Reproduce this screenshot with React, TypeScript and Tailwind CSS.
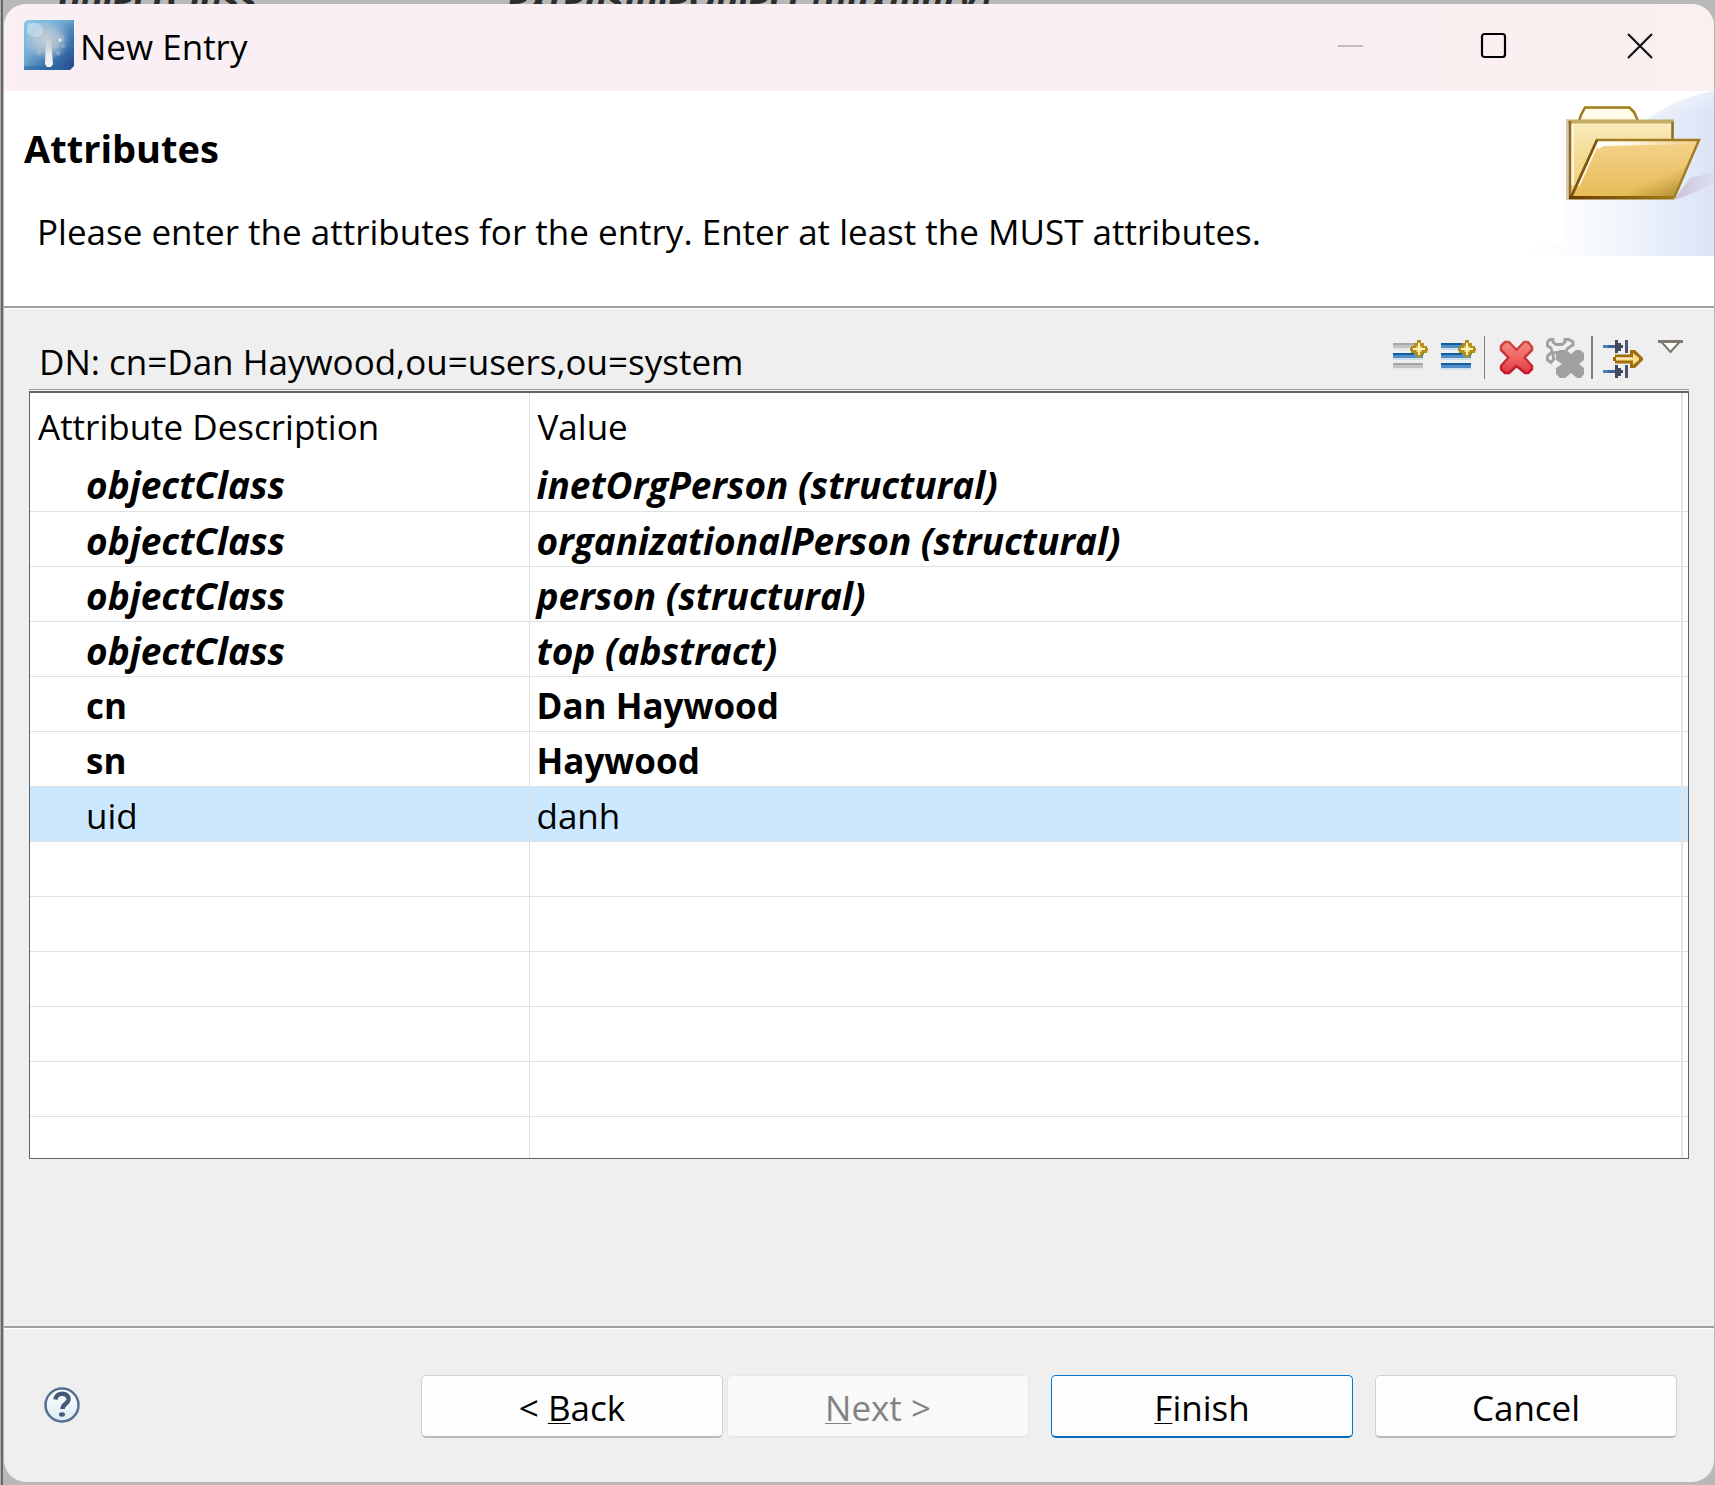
import React from "react";

type Entry = { name: string; value: string; kind: "objectClass" | "must" | "may" };

const entries: Entry[] = [
  { name: "objectClass", value: "inetOrgPerson (structural)", kind: "objectClass" },
  { name: "objectClass", value: "organizationalPerson (structural)", kind: "objectClass" },
  { name: "objectClass", value: "person (structural)", kind: "objectClass" },
  { name: "objectClass", value: "top (abstract)", kind: "objectClass" },
  { name: "cn", value: "Dan Haywood", kind: "must" },
  { name: "sn", value: "Haywood", kind: "must" },
  { name: "uid", value: "danh", kind: "may" },
];

const kindClass = {
  objectClass: "font-bold italic text-[37px]",
  must: "font-bold",
  may: "bg-[#cce8ff]",
};

function AppIcon() {
  return (
    <svg className="size-[50px]" viewBox="0 0 50 50" aria-hidden="true">
      <defs>
        <linearGradient id="app-bg" x1="0" y1="0" x2="1" y2="1">
          <stop offset="0" stopColor="#b4e0f4" />
          <stop offset="0.35" stopColor="#7fb2d6" />
          <stop offset="0.65" stopColor="#3f78b0" />
          <stop offset="1" stopColor="#1f4788" />
        </linearGradient>
        <radialGradient id="app-crown">
          <stop offset="0" stopColor="#c9d0d6" stopOpacity="0.95" />
          <stop offset="0.5" stopColor="#b9c8d4" stopOpacity="0.75" />
          <stop offset="1" stopColor="#8fb3d0" stopOpacity="0" />
        </radialGradient>
        <linearGradient id="app-trunk" x1="0" y1="0" x2="0" y2="1">
          <stop offset="0" stopColor="#d5dbe0" stopOpacity="0.3" />
          <stop offset="0.5" stopColor="#e6eaee" />
          <stop offset="1" stopColor="#f5f7f8" />
        </linearGradient>
      </defs>
      <path d="M3 0H50V46L46 50H0V3Z" fill="url(#app-bg)" />
      <path d="M3 0H50V3H5L3 5V48H0V3Z" fill="#5fb4dc" opacity="0.5" />
      <path d="M0 46H46V50H0Z" fill="#2c63a2" opacity="0.5" />
      <ellipse cx="23" cy="20" rx="24" ry="21" fill="url(#app-crown)" />
      <ellipse cx="11" cy="10" rx="8" ry="7" fill="#fff" opacity="0.3" />
      <path d="M22 20h5l2 24-2 3h-4l-2-3z" fill="url(#app-trunk)" />
      <g fill="#a9bfd1" opacity="0.5">
        <circle cx="37" cy="19" r="3.500" />
        <circle cx="32" cy="25" r="3" />
        <circle cx="39" cy="26" r="2" />
        <circle cx="15" cy="32" r="3" />
        <circle cx="34" cy="33" r="2.500" />
      </g>
      <circle cx="36" cy="20" r="1.500" fill="#eef2f4" />
    </svg>
  );
}

function FolderBanner() {
  return (
    <svg className="h-[165px] w-[185px] shrink-0" viewBox="1529 91 185 165" aria-hidden="true">
      <defs>
        <linearGradient id="sky" x1="0" y1="0" x2="1" y2="0">
          <stop offset="0" stopColor="#ffffff" />
          <stop offset="0.22" stopColor="#fbfcfe" />
          <stop offset="0.5" stopColor="#f1f5fc" />
          <stop offset="0.75" stopColor="#e5ecf9" />
          <stop offset="1" stopColor="#dce3f6" />
        </linearGradient>
        <linearGradient id="sky-glow" x1="0" y1="0" x2="0.3" y2="1">
          <stop offset="0" stopColor="#ffffff" stopOpacity="0.7" />
          <stop offset="0.6" stopColor="#ffffff" stopOpacity="0" />
        </linearGradient>
        <linearGradient id="folder-back" x1="0" y1="0" x2="0" y2="1">
          <stop offset="0" stopColor="#faf3cf" />
          <stop offset="0.5" stopColor="#f5dd97" />
          <stop offset="1" stopColor="#f0cb70" />
        </linearGradient>
        <linearGradient id="folder-front" x1="0" y1="0" x2="0" y2="1">
          <stop offset="0" stopColor="#f5d28b" />
          <stop offset="1" stopColor="#e5bc55" />
        </linearGradient>
        <linearGradient id="folder-edge" x1="0" y1="0" x2="1" y2="0">
          <stop offset="0" stopColor="#6b3d00" />
          <stop offset="1" stopColor="#a07a18" />
        </linearGradient>
        <linearGradient id="folder-shade" x1="0" y1="0" x2="1" y2="1">
          <stop offset="0.66" stopColor="#a07a18" stopOpacity="0" />
          <stop offset="0.95" stopColor="#8f6d1c" stopOpacity="0.7" />
        </linearGradient>
        <linearGradient id="folder-lip" x1="0" y1="0" x2="1" y2="0">
          <stop offset="0" stopColor="#ffffff" />
          <stop offset="0.3" stopColor="#fffaf0" />
          <stop offset="1" stopColor="#f9e2b4" stopOpacity="0.2" />
        </linearGradient>
        <linearGradient id="folder-shadow" x1="0" y1="0" x2="1" y2="0">
          <stop offset="0" stopColor="#c0b4cc" stopOpacity="0.8" />
          <stop offset="1" stopColor="#d3cde2" stopOpacity="0.3" />
        </linearGradient>
      </defs>
      <path d="M1529 244H1564V200L1640 124Q1674 98 1714 91V256H1529Z" fill="url(#sky)" />
      <path d="M1640 124Q1674 98 1714 91V145H1640Z" fill="url(#sky-glow)" />
      <path d="M1674 200L1690 178L1714 172V182Q1695 194 1674 200Z" fill="url(#folder-shadow)" />
      <path d="M1569 198V121H1578L1580 116L1585 107.500H1629L1634 113L1638 121H1672.500V198Z" fill="url(#folder-back)" />
      <path d="M1580 119L1586 109H1629L1636 119Z" fill="#fdfaea" />
      <path d="M1567.500 119V200" stroke="#d8c9ae" strokeWidth="3" />
      <path d="M1572.500 124V185" stroke="#fdf6da" strokeWidth="3" />
      <path d="M1579 121L1581 115L1585 107.500H1629.500L1634 112L1638 121" fill="none" stroke="#a07b1a" strokeWidth="2.500" />
      <path d="M1568 121.500H1674" stroke="#c4ac66" strokeWidth="4" />
      <path d="M1570 199V121M1672.500 122V140" stroke="#91692a" strokeWidth="2.500" />
      <path d="M1597 140H1699L1674 198H1571Z" fill="url(#folder-front)" />
      <path d="M1597 140H1699L1674 198H1571Z" fill="url(#folder-shade)" />
      <path d="M1578 186L1598 142" stroke="#fffaf0" strokeWidth="3" />
      <path d="M1597 141H1694V144L1604 146L1598 149Z" fill="url(#folder-lip)" />
      <path d="M1571 198L1597 140H1699L1674 198" fill="none" stroke="#a27c21" strokeWidth="2.500" />
      <path d="M1571 197L1597 140" stroke="#7d5510" strokeWidth="2.500" />
      <rect x="1569" y="196" width="105" height="3.500" fill="url(#folder-edge)" />
    </svg>
  );
}

function Spark({ x, y }: { x: number; y: number }) {
  return (
    <g transform={`translate(${x} ${y})`}>
      <path d="M-2-9H2V-6H5V-3H8V-1H9V2H8V4H5V6H2V9H-2V6H-5V4H-8V2H-9V-1H-8V-3H-5V-6H-2Z" fill="#b38d1c" />
      <path d="M-3-3H3V3H-3Z" fill="#dcc063" />
      <path d="M-1-6H1V-1H6V1H1V6H-1V1H-6V-1H-1Z" fill="#fff3b8" />
    </g>
  );
}

function Bar({ y, gray = false }: { y: number; gray?: boolean }) {
  return (
    <>
      <rect x="3" y={y} width="30" height="2" fill={gray ? "#a7a7a7" : "#0f5fa2"} />
      <rect x="3" y={y + 2} width="30" height="3" fill={gray ? "#c4c4c4" : "#4f8fc4"} />
      <rect x="3" y={y + 5} width="30" height="2" fill={gray ? "#e6e9ec" : "#cfe0f0"} />
    </>
  );
}

function NewValueIcon() {
  return (
    <svg className="h-11 w-12" viewBox="0 0 48 44" aria-hidden="true">
      <Bar y={7} gray />
      <Bar y={17} />
      <Bar y={27} gray />
      <Spark x={29} y={13} />
    </svg>
  );
}

function NewAttributeIcon() {
  return (
    <svg className="h-11 w-[46px]" viewBox="0 0 46 44" aria-hidden="true">
      <Bar y={7} />
      <Bar y={17} />
      <Bar y={27} />
      <Spark x={29} y={13} />
    </svg>
  );
}

function DeleteIcon() {
  return (
    <svg className="h-11 w-[58px]" viewBox="0 0 58 44" aria-hidden="true">
      <defs>
        <linearGradient id="red-x" x1="0" y1="0" x2="0" y2="1">
          <stop offset="0" stopColor="#f58a80" />
          <stop offset="0.5" stopColor="#f26565" />
          <stop offset="1" stopColor="#e03a42" />
        </linearGradient>
        <linearGradient id="red-edge" x1="0" y1="0" x2="0" y2="1">
          <stop offset="0" stopColor="#cf4a40" />
          <stop offset="1" stopColor="#c4152a" />
        </linearGradient>
      </defs>
      <path
        d="M20 6L24 6L31.500 14L39 6H43L47 11V14L39.500 21.500L47 30V33L43 37H40L31.500 30L24 37H20L16 33V30L23.500 21.500L16 14V10Z"
        fill="url(#red-x)"
        stroke="url(#red-edge)"
        strokeWidth="2.500"
        strokeLinejoin="round"
      />
    </svg>
  );
}

function DeleteAllIcon() {
  return (
    <svg className="h-11 w-12" viewBox="0 0 48 44" aria-hidden="true">
      <path
        d="M7 3.500H10V6L13 8.500H19L22 6V3.500H26L30 6V9L25 12L22 16H17L10 17V20L11 23L8 26.500L4.500 24V20L9 16L8 12L4.500 10V6Z"
        fill="#efefef"
        stroke="#a0a0a0"
        strokeWidth="2.800"
      />
      <path d="M17 14H23L28 18L33 14H37L41 17V24L36 28L41 32V38L38 42H34L28 37L22 42H17L13 38V32L19 28L13 24V17Z" fill="#a0a0a0" />
    </svg>
  );
}

function BlueArrow({ y }: { y: number }) {
  return (
    <>
      <rect x="10" y={y + 5} width="5" height="3" fill="#3f80bb" />
      <rect x="15" y={y + 5} width="8" height="3" fill="#3f6796" />
      <path d="M22 0H25V3H28V5H30V8H28V11H25V13H22Z" transform={`translate(0 ${y})`} fill="#424b5e" />
      <rect x="32" y={y} width="3" height="13" fill="#4c5470" />
    </>
  );
}

function QuickFilterIcon() {
  return (
    <svg className="h-11 w-[60px]" viewBox="0 0 60 44" aria-hidden="true">
      <BlueArrow y={4} />
      <BlueArrow y={29} />
      <path d="M22 18.500H37V14H42L50 22V24L42 32H37V27.500H22V25H20V21H22Z" fill="#a06c0c" />
      <path d="M23 21.500H40V17L46 22V24L40 29V24.500H23Z" fill="#f9dc8c" />
      <path d="M23 21.500H39V23H23Z" fill="#fdf0c0" />
    </svg>
  );
}

function MenuIcon() {
  return (
    <svg className="h-11 w-9" viewBox="0 0 36 44" aria-hidden="true">
      <path d="M8 5.500H27L17.500 16Z" fill="#fff" stroke="#7d776c" strokeWidth="2" />
      <rect x="5" y="4" width="25" height="3" fill="#7d776c" />
    </svg>
  );
}

function HelpIcon() {
  return (
    <svg className="size-9" viewBox="0 0 36 36" aria-hidden="true">
      <defs>
        <linearGradient id="help-bg" x1="0" y1="0" x2="0" y2="1">
          <stop offset="0" stopColor="#ffffff" />
          <stop offset="1" stopColor="#dcebf4" />
        </linearGradient>
      </defs>
      <circle cx="18" cy="18" r="16.500" fill="url(#help-bg)" stroke="#566f92" strokeWidth="2.500" />
      <path d="M11.500 12.500C12 4.500 25 5 24.500 12.500C24 17 18.500 17 18.500 22" fill="none" stroke="#44597a" strokeWidth="4.500" />
      <ellipse cx="18" cy="27.500" rx="3" ry="2.200" fill="#44597a" />
    </svg>
  );
}

function Rule() {
  return <div className="h-[3px] border-t-2 border-[#a0a0a0] bg-white" />;
}

const buttonBase = "h-[63px] w-[302px] rounded-[5px] border border-b-2 pt-1";
const cell = "border-r border-[#e0e0e0]";
const lastCell = "border-r-2 border-[#e4e4e4]";

export default function App() {
  return (
    <div className="relative flex min-h-screen flex-col bg-[#b8b8b8] pt-1 pr-px pb-[3px] pl-1 font-['Open_Sans','Noto_Sans',sans-serif] text-[35px] leading-[44px] text-black">
      <div className="absolute inset-x-0 top-0 h-1 overflow-hidden text-[37px] text-[#2d2d2d]">
        <div className="absolute -top-6 left-[58px] flex font-bold italic">
          <span className="w-[450px]">objectClass</span>
          <span>extensibleObject (auxiliary)</span>
        </div>
      </div>
      <div className="absolute inset-y-0 left-0 w-[3px] border-l border-[#b0b0b0] bg-[#666]" />

      <div className="relative flex flex-1 flex-col overflow-hidden rounded-[22px] bg-[#efefef]">
        <header className="flex h-[87px] shrink-0 items-start bg-linear-to-r from-[#f9eff4] to-[#faf0f0] pl-5">
          <div className="flex flex-1 items-center gap-[6px] pt-4">
            <AppIcon />
            <h1 className="pt-1">New Entry</h1>
          </div>
          <div className="flex">
            <button aria-label="Minimize" disabled className="flex h-[83px] w-[143px] items-center justify-center">
              <svg className="h-7 w-7" viewBox="0 0 28 28"><path d="M1 14H26" stroke="#c2bcbc" strokeWidth="2" /></svg>
            </button>
            <button aria-label="Maximize" className="flex h-[83px] w-[144px] items-center justify-center">
              <svg className="h-7 w-7" viewBox="0 0 28 28"><rect x="2" y="2" width="23" height="23" rx="2.500" fill="none" stroke="#000" strokeWidth="2.200" /></svg>
            </button>
            <button aria-label="Close" className="flex h-[83px] w-[148px] items-center justify-center">
              <svg className="h-7 w-7" viewBox="0 0 28 28"><path d="M2 2L26 26M26 2L2 26" stroke="#111" strokeWidth="2.200" /></svg>
            </button>
          </div>
        </header>

        <section className="flex h-[215px] shrink-0 bg-white">
          <div className="flex-1 pt-[35px]">
            <h2 className="pl-5 text-[38px] font-bold">Attributes</h2>
            <p className="pt-10 pl-[33px] whitespace-nowrap">Please enter the attributes for the entry. Enter at least the MUST attributes.</p>
          </div>
          <FolderBanner />
        </section>
        <Rule />

        <main className="flex-1 px-[25px]">
          <div className="flex h-20 items-start justify-between">
            <div className="pt-[31px] pl-[10px]">DN: cn=Dan Haywood,ou=users,ou=system</div>
            <div className="flex pt-[27px]">
              <button aria-label="New value"><NewValueIcon /></button>
              <button aria-label="New attribute"><NewAttributeIcon /></button>
              <div className="h-[43px] w-px bg-[#808080]" />
              <button aria-label="Delete value"><DeleteIcon /></button>
              <button aria-label="Delete all values" disabled><DeleteAllIcon /></button>
              <div className="h-[43px] w-[2px] bg-[#808080]" />
              <button aria-label="Quick filter"><QuickFilterIcon /></button>
              <button aria-label="View menu"><MenuIcon /></button>
            </div>
          </div>
          <div className="border-t border-[#a0a0a0] pt-px">
            <div className="border border-t-2 border-[#646464] bg-white">
              <table className="w-full table-fixed border-collapse text-left">
                <thead>
                  <tr className="h-[63px]">
                    <th className={`${cell} w-[499px] pt-1 pl-2 font-normal`}>Attribute Description</th>
                    <th className={`${lastCell} pt-1 pl-2 font-normal`}>Value</th>
                    <th className="w-[6px]" aria-hidden="true" />
                  </tr>
                </thead>
                <tbody>
                  {entries.map((e, i) => (
                    <tr key={i} className={`h-[55px] border-b border-[#e0e0e0] ${kindClass[e.kind]}`}>
                      <td className={`${cell} pt-1 pl-14`}>{e.name}</td>
                      <td className={`${lastCell} pt-1 pl-[7px]`}>{e.value}</td>
                      <td />
                    </tr>
                  ))}
                  {[0, 1, 2, 3, 4].map((i) => (
                    <tr key={i} className="h-[55px] border-b border-[#e0e0e0]">
                      <td className={cell} />
                      <td className={lastCell} />
                      <td />
                    </tr>
                  ))}
                  <tr className="h-[42px]">
                    <td className={cell} />
                    <td className={lastCell} />
                    <td />
                  </tr>
                </tbody>
              </table>
            </div>
          </div>
        </main>

        <Rule />
        <footer className="flex h-[153px] shrink-0 items-start justify-between pt-[46px] pr-[37px] pl-10">
          <button aria-label="Help" className="mt-3"><HelpIcon /></button>
          <div className="flex">
            <button className={`${buttonBase} border-[#d0d0d0] border-b-[#bababa] bg-[#fdfdfd]`}>
              &lt; <span className="underline decoration-1 underline-offset-2">B</span>ack
            </button>
            <button disabled className={`${buttonBase} ml-1 border-[#e8e8e8] bg-[#f9f9f9] text-[#838383]`}>
              <span className="underline decoration-1 underline-offset-2">N</span>ext &gt;
            </button>
            <button className={`${buttonBase} ml-[22px] border-[#0078d4] border-b-[#006cbf] bg-[#fdfdfd]`}>
              <span className="underline decoration-1 underline-offset-2">F</span>inish
            </button>
            <button className={`${buttonBase} ml-[22px] border-[#d0d0d0] border-b-[#bababa] bg-[#fdfdfd]`}>Cancel</button>
          </div>
        </footer>
      </div>
    </div>
  );
}
